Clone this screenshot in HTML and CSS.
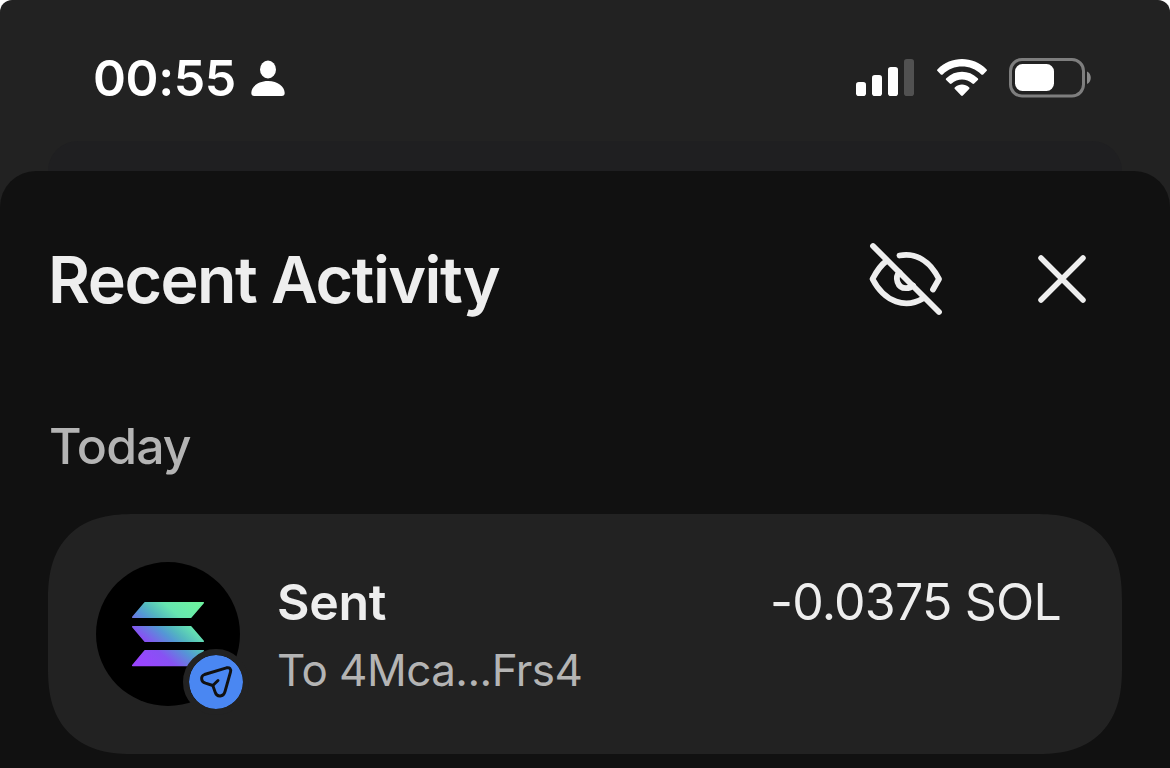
FILE: index.html
```html
<!DOCTYPE html>
<html lang="en">
<head>
    <meta charset="UTF-8">
    <meta name="viewport" content="width=device-width, initial-scale=1.0">
    <title>Recent Activity</title>
    <link rel="stylesheet" href="styles.css">
</head>
<body>

<div class="screen">
    <header class="status-bar">
        <div class="clock">
            <span class="time">00:55</span>
            <svg class="person" width="34" height="38" viewBox="0 0 34 38" fill="#fff">
                <ellipse cx="17" cy="9.5" rx="8" ry="9"/>
                <path d="M17 21C7 21 .3 27 .3 33c0 2 1 3 3 3h27.400c2 0 3-1 3-3C33.700 27 27 21 17 21z"/>
            </svg>
        </div>
        <div class="indicators">
            <svg width="58" height="38" viewBox="0 0 58 38" fill="#fff">
                <rect x="0" y="23" width="10" height="14" rx="2.800"/>
                <rect x="16" y="16" width="10" height="21" rx="2.800"/>
                <rect x="32" y="8" width="10" height="29" rx="2.800"/>
                <rect x="48" y="0" width="10" height="37" rx="2.800" fill="#515151"/>
            </svg>
            <svg width="50" height="38" viewBox="0 0 50 38" fill="#fff">
                <path d="M.6 10.200C14-3.400 36-3.400 49.400 10.200c.7.700.7 1.200.1 1.800l-3.300 3.400c-.6.600-1.200.6-1.900 0C33.500 4.800 16.500 4.800 5.700 15.400c-.7.600-1.300.6-1.900 0L.5 12c-.6-.6-.6-1.100.1-1.800z"/>
                <path d="M9.300 19.200c8.800-8.600 22.600-8.600 31.400 0 .7.700.7 1.200.1 1.800l-3.600 3.600c-.6.600-1.200.6-1.900 0-5.800-5.500-14.800-5.500-20.600 0-.7.600-1.300.6-1.900 0L9.200 21c-.6-.6-.6-1.100.1-1.800z"/>
                <path d="M18 28.200c4-3.600 10-3.600 14 0 .7.700.7 1.200.1 1.800l-6.200 6.500c-.6.600-1.200.6-1.800 0L17.900 30c-.6-.6-.6-1.100.1-1.800z"/>
            </svg>
            <svg class="battery" width="84" height="40" viewBox="0 0 84 40">
                <rect x="1.500" y="1.500" width="73" height="36.500" rx="11.500" fill="none" stroke="#7e7e7e" stroke-width="3"/>
                <rect x="6" y="6" width="39" height="27" rx="7.500" fill="#fff"/>
                <path d="M78 13.500c5 2.300 5 10.200 0 12.500z" fill="#8a8a8a"/>
            </svg>
        </div>
    </header>

    <div class="sheet-behind"></div>

    <main class="sheet">
        <div class="sheet-header">
            <h1 class="title">Recent Activity</h1>
            <div class="actions">
                <svg width="74" height="74" viewBox="0 0 74 74" fill="none" stroke="#eee" stroke-width="5.800" stroke-linecap="round" stroke-linejoin="round">
                    <path d="M4 4l66 66"/>
                    <path d="M30.500 13.500C47 10.500 61 19 70 37L64 47.500"/>
                    <path d="M17.500 19C12.500 22.500 8 28.500 3.500 37C16 61 37 66.500 54 56.500"/>
                    <path d="M30.500 30.500C25.500 35 28 46 37 46.200c3.500 0 5.500-1 7-2.700"/>
                </svg>
                <svg class="close" width="50" height="50" viewBox="0 0 50 50" fill="none" stroke="#eee" stroke-width="5.500" stroke-linecap="round">
                    <path d="M4 4l42 42M46 4L4 46"/>
                </svg>
            </div>
        </div>

        <h2 class="day">Today</h2>

        <div class="card">
            <div class="token">
                <svg width="144" height="144" viewBox="0 0 144 144">
                    <defs>
                        <linearGradient id="sol" gradientUnits="userSpaceOnUse" x1="44" y1="108" x2="101" y2="42">
                            <stop offset="0.08" stop-color="#9945ff"/>
                            <stop offset="0.3" stop-color="#8752f3"/>
                            <stop offset="0.5" stop-color="#5497d5"/>
                            <stop offset="0.6" stop-color="#53b8bf"/>
                            <stop offset="0.76" stop-color="#66e5b0"/>
                            <stop offset="1" stop-color="#6df2a0"/>
                        </linearGradient>
                    </defs>
                    <circle cx="72" cy="72" r="72" fill="#000"/>
                    <g fill="url(#sol)" stroke="url(#sol)" stroke-width="1.500" stroke-linejoin="round">
                        <path d="M49 40.700h58.300L94.800 55.300H36.700z"/>
                        <path d="M36.700 64.700h58.100L107.300 79.300H49z"/>
                        <path d="M49 88.700h58.300L94.800 103.600H36.700z"/>
                    </g>
                </svg>
                <div class="badge">
                    <svg width="54" height="54" viewBox="0 0 54 54" fill="none" stroke="#111" stroke-width="2.900" stroke-linecap="round" stroke-linejoin="round">
                        <path d="M15.500 19.500L37.500 12.800Q42.500 12 41.500 17L36 36.500C34.500 42 28 42.500 26.300 37.500L23.800 30.500L16.500 28.200C11.500 26.500 11.500 21 15.500 19.500z"/>
                        <path d="M23.800 30.500L29 25.500"/>
                    </svg>
                </div>
            </div>
            <div class="details">
                <div class="row">
                    <span class="type">Sent</span>
                    <span class="amount">-0.0375 SOL</span>
                </div>
                <div class="address">To 4Mca...Frs4</div>
            </div>
        </div>
    </main>
</div>

</body>
</html>
```

FILE: styles.css
```css
body {
    margin: 0;
    background-color: #fff;
    font-family: Inter, "Liberation Sans", sans-serif;
    color: #eee;
}
.screen {
    display: flex;
    flex-direction: column;
    height: 768px;
    overflow: hidden;
    border-radius: 12px 12px 0 0;
    background-color: #222;
}
.status-bar {
    display: flex;
    justify-content: space-between;
    height: 82px;
    padding: 59px 77px 0 93px;
    color: #fff;
}
.clock {
    display: flex;
    gap: 15px;
}
.time {
    width: 143px;
    font-size: 50px;
    line-height: 39px;
    font-weight: 600;
    letter-spacing: -0.4px;
    white-space: nowrap;
}
.person {
    margin-top: 1px;
}
.indicators {
    display: flex;
    gap: 22.5px;
}
.battery {
    margin-top: -1px;
}
.sheet-behind {
    flex: none;
    height: 30px;
    margin: 0 48px;
    border-radius: 30px 30px 0 0;
    background-color: #1f1f21;
}
.sheet {
    flex: 1;
    padding: 0 48px;
    border-radius: 36px 36px 0 0;
    background-color: #111;
}
.sheet-header {
    display: flex;
    align-items: center;
    justify-content: space-between;
    height: 216px;
}
.title {
    margin: 2px 0 0;
    font-size: 64.5px;
    font-weight: 600;
    letter-spacing: -1.5px;
    white-space: nowrap;
}
.actions {
    display: flex;
    align-items: center;
    gap: 94px;
    padding-right: 35px;
}
.day {
    margin: 29px 0 0 1px;
    font-size: 50px;
    line-height: 60px;
    font-weight: 500;
    letter-spacing: -0.9px;
    color: #b4b4b4;
}
.card {
    display: flex;
    box-sizing: border-box;
    height: 240px;
    margin: 38px 0 0;
    padding: 48px 61px 0 48px;
    border-radius: 72px;
    background-color: #222;
}
@supports (corner-shape: squircle) {
    .card {
        border-radius: 86px;
        corner-shape: superellipse(1.3);
    }
}
.token {
    position: relative;
    width: 144px;
    height: 144px;
}
.badge {
    position: absolute;
    left: 87px;
    top: 87px;
    width: 54px;
    height: 54px;
    border: 6px solid #222;
    border-radius: 50%;
    background-color: #4a87f2;
    background-clip: padding-box;
}
.details {
    flex: 1;
    margin-left: 37px;
}
.row {
    display: flex;
    justify-content: space-between;
    margin-top: 10px;
    font-size: 50px;
    line-height: 60px;
}
.type {
    font-weight: 600;
    letter-spacing: -0.3px;
}
.amount {
    letter-spacing: -0.8px;
}
.address {
    margin-top: 9px;
    font-size: 44px;
    line-height: 58px;
    letter-spacing: -0.55px;
    color: #b4b4b4;
}
```
